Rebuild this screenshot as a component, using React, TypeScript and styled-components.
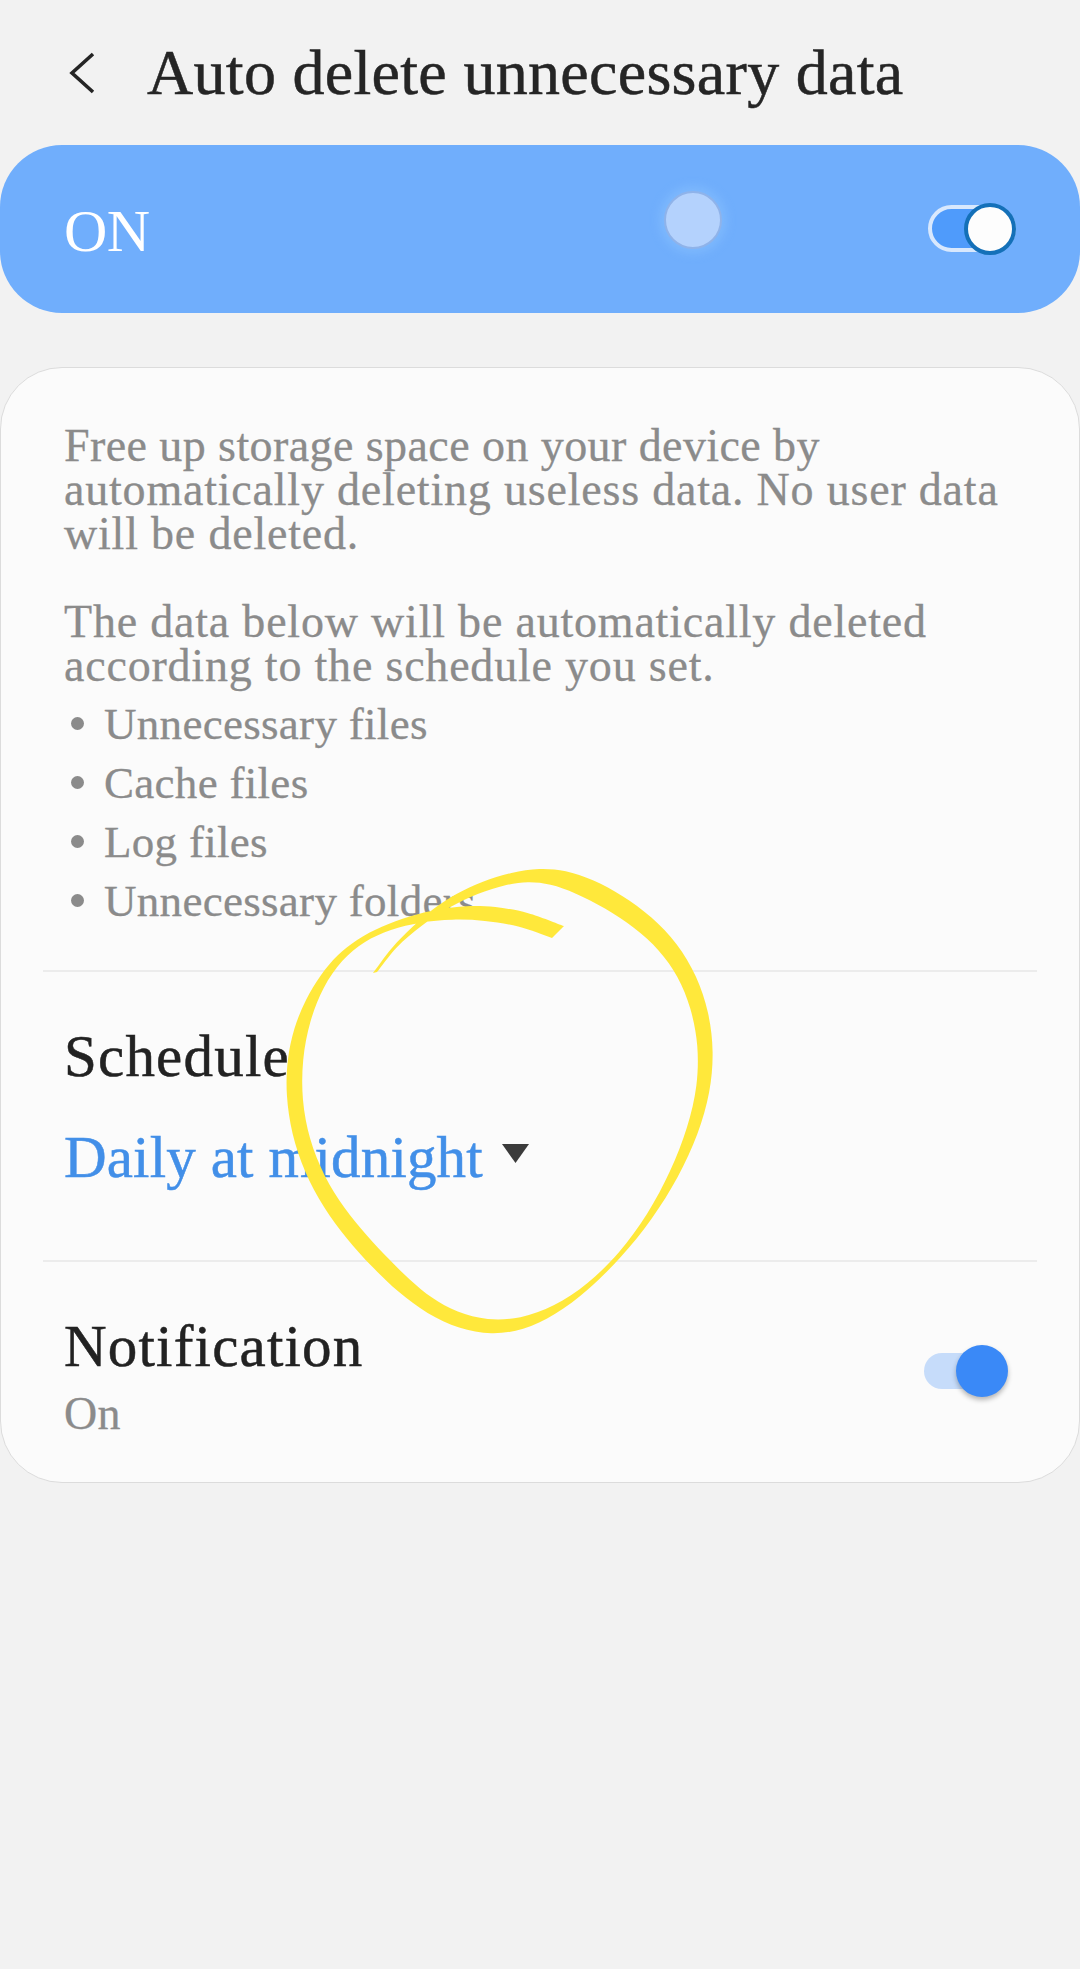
import React from 'react'
import styled, { createGlobalStyle } from 'styled-components'

const GlobalStyle = createGlobalStyle`
  html, body {
    margin: 0;
    padding: 0;
    background: #f2f2f2;
  }
  * {
    box-sizing: border-box;
  }
`

const Page = styled.div`
  position: relative;
  width: 1080px;
  height: 1969px;
  overflow: hidden;
  background: #f2f2f2;
  font-family: "Liberation Serif", serif;
`

const Header = styled.header`
  display: flex;
  align-items: center;
  height: 145px;
  padding: 0 0 0 68px;
`

const BackIcon = styled.svg`
  width: 30px;
  height: 44px;
  margin-right: 49px;
`

const Title = styled.h1`
  margin: 0;
  font-size: 64px;
  font-weight: 400;
  letter-spacing: 0.3px;
  color: #252525;
  line-height: 72px;
  -webkit-text-stroke: 0.5px #252525;
`

const Banner = styled.section`
  display: flex;
  align-items: center;
  justify-content: space-between;
  height: 168px;
  padding: 0 64px;
  border-radius: 62px;
  background: #70aefc;
`

const BannerLabel = styled.span`
  font-size: 60px;
  letter-spacing: -0.5px;
  color: #fff;
  margin-top: 4px;
`

const MainSwitch = styled.div`
  position: relative;
  width: 88px;
  height: 47px;
  margin-top: -1px;
  border: 4px solid #d8e8fd;
  border-radius: 24px;
  background: linear-gradient(90deg, #4f9bfb 70%, transparent 70%);
`

const MainThumb = styled.span`
  position: absolute;
  right: -4px;
  top: -6px;
  width: 52px;
  height: 52px;
  border: 4px solid #1470b8;
  border-radius: 50%;
  background: #fdfdfd;
`

const TouchDot = styled.span`
  position: absolute;
  left: 664px;
  top: 191px;
  width: 58px;
  height: 58px;
  border: 2px solid #8fb3ea;
  border-radius: 50%;
  background: #b4d2fd;
  box-shadow: 0 0 9px 5px #7db8fd;
`

const Card = styled.section`
  margin-top: 54px;
  height: 1116px;
  border: 1px solid #dcdcdc;
  border-radius: 62px;
  background: #fbfbfb;
`

const Intro = styled.div`
  height: 602px;
  padding: 56px 63px 0;
  color: #8b8b8b;
  font-size: 46px;
  letter-spacing: 0.8px;
  line-height: 44px;
  -webkit-text-stroke: 0.3px #8b8b8b;
`

const Paragraph = styled.p`
  margin: 0 0 44px;
`

const LastParagraph = styled(Paragraph)`
  margin-bottom: 6px;
`

const TightLine = styled.span`
  letter-spacing: 0.42px;
`

const BulletList = styled.ul`
  margin: 0;
  padding: 0;
  list-style: none;
  font-size: 45px;
  letter-spacing: 0.3px;
`

const Bullet = styled.li`
  display: flex;
  align-items: center;
  height: 59px;
`

const Dot = styled.span`
  width: 13px;
  height: 13px;
  margin: 0 20px 0 7px;
  border-radius: 50%;
  background: #8b8b8b;
`

const Divider = styled.hr`
  margin: 0 42px;
  border: 0;
  border-top: 2px solid #ececec;
`

const ScheduleBlock = styled.div`
  height: 288px;
  padding: 51px 63px 0;
`

const RowTitle = styled.div`
  font-size: 59px;
  letter-spacing: 1.2px;
  line-height: 66px;
  color: #222;
  -webkit-text-stroke: 0.5px #222;
`

const ScheduleValue = styled.div`
  display: flex;
  align-items: center;
  margin-top: 35px;
  font-size: 59px;
  letter-spacing: 0.15px;
  line-height: 66px;
  color: #428fe8;
  -webkit-text-stroke: 0.5px #428fe8;
`

const Caret = styled.svg`
  width: 27px;
  height: 19px;
  margin: -8px 0 0 19px;
`

const NotificationRow = styled.div`
  display: flex;
  align-items: center;
  justify-content: space-between;
  padding: 51px 79px 0 63px;
`

const RowSub = styled.div`
  margin-top: 11px;
  font-size: 46px;
  letter-spacing: 0.4px;
  line-height: 48px;
  color: #8b8b8b;
  -webkit-text-stroke: 0.3px #8b8b8b;
`

const SmallSwitch = styled.div`
  position: relative;
  width: 76px;
  height: 36px;
  margin-top: -9px;
  border-radius: 18px;
  background: #c6dcfa;
`

const SmallThumb = styled.span`
  position: absolute;
  right: -8px;
  top: -8px;
  width: 52px;
  height: 52px;
  border-radius: 50%;
  background: #3a89f7;
  box-shadow: 0 3px 5px rgba(0, 0, 0, 0.28);
`

const Scribble = styled.svg`
  position: absolute;
  left: 250px;
  top: 840px;
  width: 500px;
  height: 520px;
  pointer-events: none;
`

type Pt = [number, number]

// marker stroke traced off the reference: outer edge from the blunt end to the thin tail
const scribbleOuter: Pt[] = [
  [564, 926], [520, 910], [493, 906], [467, 907], [440, 910], [413, 916], [380, 928],
  [353, 942], [340, 953], [323, 973], [307, 1000], [293, 1027], [287, 1057], [286, 1097],
  [290, 1130], [303, 1173], [323, 1210], [350, 1240], [373, 1263], [397, 1290], [427, 1317],
  [457, 1330], [497, 1337], [520, 1333], [553, 1320], [587, 1290], [620, 1258], [653, 1223],
  [680, 1173], [700, 1133], [712, 1093], [716, 1050], [710, 1015], [697, 973], [680, 943],
  [653, 917], [620, 895], [587, 878], [563, 870], [543, 868], [513, 872], [480, 883],
  [453, 897], [433, 908], [415, 927], [393, 950], [373, 973],
]

// inner edge, back from the tail to the blunt end
const scribbleInner: Pt[] = [
  [377, 972], [397, 948], [417, 927], [450, 907], [480, 893], [507, 885], [533, 882],
  [543, 883], [570, 892], [603, 907], [637, 930], [663, 953], [677, 972], [690, 1003],
  [702, 1050], [700, 1083], [690, 1123], [670, 1173], [650, 1213], [620, 1257], [587, 1287],
  [553, 1308], [520, 1323], [487, 1323], [453, 1313], [430, 1297], [410, 1277], [393, 1260],
  [370, 1233], [345, 1213], [323, 1177], [307, 1140], [300, 1100], [302, 1060], [308, 1020],
  [323, 983], [343, 955], [363, 942], [390, 928], [420, 923], [453, 920], [487, 920],
  [513, 925], [552, 938],
]

// the traced points are a bit noisy, so even them out but keep both ends,
// then scale back up what the averaging pulled in
const soften = (pts: Pt[], passes: number): Pt[] => {
  let out = pts
  for (let n = 0; n < passes; n++) {
    out = out.map((p, i) => {
      if (i === 0 || i === out.length - 1) return p
      const a = out[i - 1]
      const b = out[i + 1]
      return [(a[0] + 2 * p[0] + b[0]) / 4, (a[1] + 2 * p[1] + b[1]) / 4] as Pt
    })
  }
  return out.map((p, i) => {
    if (i === 0 || i === out.length - 1) return p
    return [500 + (p[0] - 500) * 1.016, 1100 + (p[1] - 1100) * 1.016] as Pt
  })
}

const curve = (pts: Pt[]) => {
  let d = ''
  for (let i = 0; i < pts.length - 1; i++) {
    const p0 = pts[Math.max(i - 1, 0)]
    const p1 = pts[i]
    const p2 = pts[i + 1]
    const p3 = pts[Math.min(i + 2, pts.length - 1)]
    const c1x = p1[0] + (p2[0] - p0[0]) / 6
    const c1y = p1[1] + (p2[1] - p0[1]) / 6
    const c2x = p2[0] - (p3[0] - p1[0]) / 6
    const c2y = p2[1] - (p3[1] - p1[1]) / 6
    d += `C${c1x} ${c1y} ${c2x} ${c2y} ${p2[0]} ${p2[1]}`
  }
  return d
}

const scribblePath =
  `M${scribbleOuter[0].join(' ')}` +
  curve(soften(scribbleOuter, 3)) +
  `L${scribbleInner[0].join(' ')}` +
  curve(soften(scribbleInner, 3)) +
  'Z'

const files = ['Unnecessary files', 'Cache files', 'Log files', 'Unnecessary folders']

export default function App() {
  return (
    <Page>
      <GlobalStyle />
      <Header>
        <BackIcon viewBox="0 0 30 44">
          <path d="M25 3 L4 22 L25 41" fill="none" stroke="#252525" strokeWidth="3.6" />
        </BackIcon>
        <Title>Auto delete unnecessary data</Title>
      </Header>
      <Banner>
        <BannerLabel>ON</BannerLabel>
        <MainSwitch>
          <MainThumb />
        </MainSwitch>
      </Banner>
      <TouchDot />
      <Card>
        <Intro>
          <Paragraph>
            <TightLine>Free up storage space on your device by</TightLine>
            <br />
            automatically deleting useless data. No user data
            <br />
            will be deleted.
          </Paragraph>
          <LastParagraph>
            The data below will be automatically deleted
            <br />
            according to the schedule you set.
          </LastParagraph>
          <BulletList>
            {files.map((name) => (
              <Bullet key={name}>
                <Dot />
                {name}
              </Bullet>
            ))}
          </BulletList>
        </Intro>
        <Divider />
        <ScheduleBlock>
          <RowTitle>Schedule</RowTitle>
          <ScheduleValue>
            Daily at midnight
            <Caret viewBox="0 0 27 19">
              <path d="M0 0 H27 L13.5 19 Z" fill="#3b3b3b" />
            </Caret>
          </ScheduleValue>
        </ScheduleBlock>
        <Divider />
        <NotificationRow>
          <div>
            <RowTitle>Notification</RowTitle>
            <RowSub>On</RowSub>
          </div>
          <SmallSwitch>
            <SmallThumb />
          </SmallSwitch>
        </NotificationRow>
      </Card>
      <Scribble viewBox="250 840 500 520">
        <path d={scribblePath} fill="#ffe83b" />
      </Scribble>
    </Page>
  )
}
